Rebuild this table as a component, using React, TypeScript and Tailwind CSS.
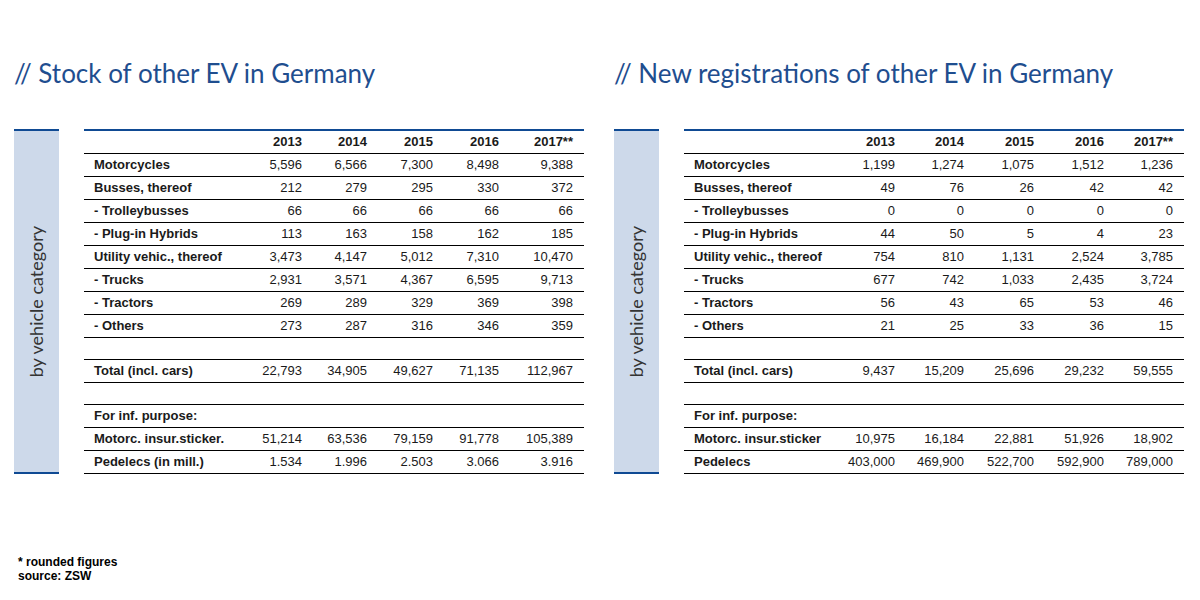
import React from 'react';

type Row = { label: string; values: string[] } | null;

const leftRows: Row[] = [
  { label: 'Motorcycles', values: ['5,596', '6,566', '7,300', '8,498', '9,388'] },
  { label: 'Busses, thereof', values: ['212', '279', '295', '330', '372'] },
  { label: '- Trolleybusses', values: ['66', '66', '66', '66', '66'] },
  { label: '- Plug-in Hybrids', values: ['113', '163', '158', '162', '185'] },
  { label: 'Utility vehic., thereof', values: ['3,473', '4,147', '5,012', '7,310', '10,470'] },
  { label: '- Trucks', values: ['2,931', '3,571', '4,367', '6,595', '9,713'] },
  { label: '- Tractors', values: ['269', '289', '329', '369', '398'] },
  { label: '- Others', values: ['273', '287', '316', '346', '359'] },
  null,
  { label: 'Total (incl. cars)', values: ['22,793', '34,905', '49,627', '71,135', '112,967'] },
  null,
  { label: 'For inf. purpose:', values: ['', '', '', '', ''] },
  { label: 'Motorc. insur.sticker.', values: ['51,214', '63,536', '79,159', '91,778', '105,389'] },
  { label: 'Pedelecs (in mill.)', values: ['1.534', '1.996', '2.503', '3.066', '3.916'] },
];

const rightRows: Row[] = [
  { label: 'Motorcycles', values: ['1,199', '1,274', '1,075', '1,512', '1,236'] },
  { label: 'Busses, thereof', values: ['49', '76', '26', '42', '42'] },
  { label: '- Trolleybusses', values: ['0', '0', '0', '0', '0'] },
  { label: '- Plug-in Hybrids', values: ['44', '50', '5', '4', '23'] },
  { label: 'Utility vehic., thereof', values: ['754', '810', '1,131', '2,524', '3,785'] },
  { label: '- Trucks', values: ['677', '742', '1,033', '2,435', '3,724'] },
  { label: '- Tractors', values: ['56', '43', '65', '53', '46'] },
  { label: '- Others', values: ['21', '25', '33', '36', '15'] },
  null,
  { label: 'Total (incl. cars)', values: ['9,437', '15,209', '25,696', '29,232', '59,555'] },
  null,
  { label: 'For inf. purpose:', values: ['', '', '', '', ''] },
  { label: 'Motorc. insur.sticker', values: ['10,975', '16,184', '22,881', '51,926', '18,902'] },
  { label: 'Pedelecs', values: ['403,000', '469,900', '522,700', '592,900', '789,000'] },
];

const years = ['2013', '2014', '2015', '2016', '2017**'];

const Panel = ({ title, rows, cols }: { title: string; rows: Row[]; cols: string }) => (
  <div className="w-[600px] pl-[14px] pt-[57px]">
    <h2 className="h-[32px] leading-[32px] text-[26px] text-[#1f4e8f] font-['Lato','Open_Sans',sans-serif]">
      {title}
    </h2>

    <div className="mt-[40px] flex">
      {/* category label */}
      <div className="w-[45px] bg-[#cdd9ea] border-t-2 border-b-2 border-[#0f4a93] flex items-center justify-center">
        <span className="[writing-mode:vertical-rl] rotate-180 text-[18px] text-[#333333] font-['Lato','Open_Sans',sans-serif] whitespace-nowrap">
          by vehicle category
        </span>
      </div>

      {/* table */}
      <div className="ml-[25px] w-[500px] border-t-2 border-[#0f4a93] font-['Liberation_Sans',Arial,sans-serif] text-[13px] text-[#1a1a1a]">
        <div className={`grid ${cols} h-[23px] border-b border-black items-center font-bold`}>
          <div />
          {years.map((y) => (
            <div key={y} className="text-right pr-[11px]">{y}</div>
          ))}
        </div>
        {rows.map((r, i) =>
          r ? (
            <div key={i} className={`grid ${cols} h-[23px] border-b border-black items-center`}>
              <div className="pl-[10px] font-bold whitespace-nowrap">{r.label}</div>
              {r.values.map((v, j) => (
                <div key={j} className="text-right pr-[11px]">{v}</div>
              ))}
            </div>
          ) : (
            <div key={i} className="h-[22px] border-b border-black" />
          )
        )}
      </div>
    </div>
  </div>
);

export default function App() {
  return (
    <div className="w-[1200px] h-[600px] bg-white overflow-hidden">
      <div className="flex">
        <Panel
          title="// Stock of other EV in Germany"
          rows={leftRows}
          cols="grid-cols-[164px_65px_65px_66px_66px_74px]"
        />
        <Panel
          title="// New registrations of other EV in Germany"
          rows={rightRows}
          cols="grid-cols-[153px_69px_69px_70px_70px_69px]"
        />
      </div>
      <div className="mt-[81px] pl-[18px] font-['Liberation_Sans',Arial,sans-serif] font-bold text-[12px] leading-[14px] text-black">
        <div>* rounded figures</div>
        <div>source: ZSW</div>
      </div>
    </div>
  );
}
